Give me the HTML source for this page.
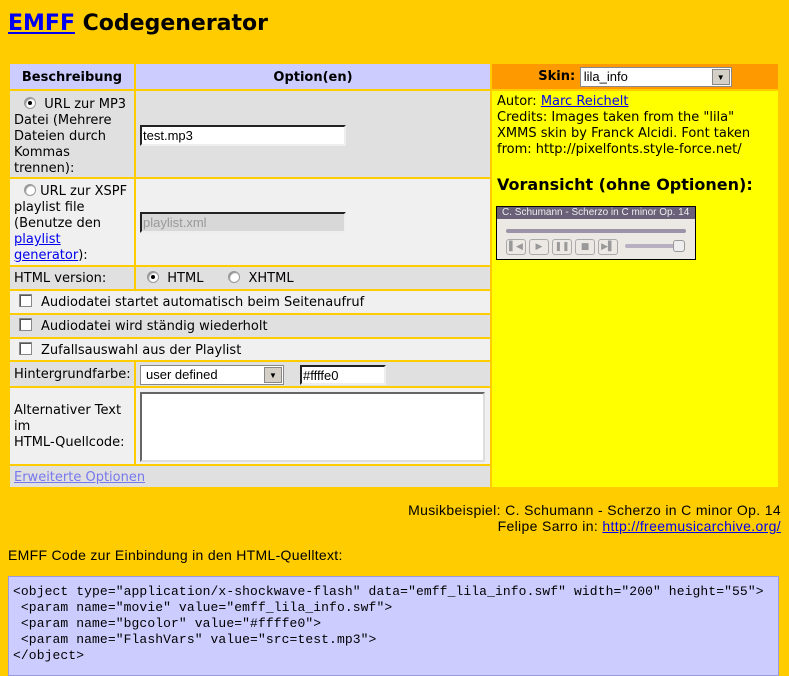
<!DOCTYPE html>
<html><head><meta charset="utf-8"><style>
body{margin:0;width:789px;height:668px;background:#ffcc00;font-family:"DejaVu Sans",Verdana,sans-serif;font-size:13px;color:#000;position:relative;overflow:hidden}
.a{position:absolute;box-sizing:border-box}
a{color:#0000ee}
.g{background:#e0e0e0}.l{background:#f0f0f0}
.h{background:#ccccff;font-weight:bold;text-align:center;line-height:27px}
.t{padding:0 4px;line-height:16px}
input.i{position:absolute;border:2px inset #ddd;border-color:#777 #eee #eee #777;background:#fff;font:13px "Liberation Sans",sans-serif;padding:0 1px;box-sizing:border-box}
.rad{display:inline-block;width:10px;height:10px;border-radius:50%;border:1px solid #999;background:#fff;vertical-align:-1px;position:relative;box-shadow:inset 1px 1px 1px #888}
.rad.on:after{content:"";position:absolute;left:3px;top:3px;width:4px;height:4px;border-radius:50%;background:#000}
.cb{display:inline-block;width:11px;height:11px;border:1px solid #888;background:#fff;box-shadow:inset 1px 1px 0 #555;vertical-align:-1px;margin-right:9px}
.btn{position:absolute;top:239px;width:20px;height:16px;border:1px solid #aaa;border-radius:3px;box-sizing:border-box;color:#999;font-size:9px;text-align:center;line-height:14px}
</style></head><body>
<div class="a" style="left:8px;top:9px;font-size:22px;font-weight:bold;line-height:30px"><a href="#">EMFF</a> Codegenerator</div>

<div class="a h" style="left:10px;top:64px;width:124px;height:25px">Beschreibung</div>
<div class="a h" style="left:136px;top:64px;width:354px;height:25px">Option(en)</div>

<div class="a g t" style="left:10px;top:91px;width:124px;height:86px;padding-top:6px"><span class="rad on" style="margin-left:10px"></span>&nbsp; URL zur MP3 Datei (Mehrere Dateien durch Kommas trennen):</div>
<div class="a g" style="left:136px;top:91px;width:354px;height:86px"></div>
<input class="i" style="left:140px;top:125px;width:206px;height:21px" value="test.mp3">

<div class="a l t" style="left:10px;top:179px;width:124px;height:86px;padding-top:5px"><span class="rad" style="margin-left:10px"></span> URL zur XSPF playlist file (Benutze den <a href="#">playlist generator</a>):</div>
<div class="a l" style="left:136px;top:179px;width:354px;height:86px"></div>
<input class="i" style="left:140px;top:212px;width:206px;height:21px;background:#d8d8d8;color:#999" value="playlist.xml">

<div class="a g t" style="left:10px;top:267px;width:124px;height:22px;line-height:24px">HTML version:</div>
<div class="a g" style="left:136px;top:267px;width:354px;height:22px;line-height:24px;padding-left:11px"><span class="rad on"></span>&nbsp; HTML &nbsp;&nbsp;&nbsp;&nbsp; <span class="rad"></span>&nbsp; XHTML</div>

<div class="a l" style="left:10px;top:291px;width:480px;height:22px;line-height:24px;padding-left:9px"><span class="cb"></span>Audiodatei startet automatisch beim Seitenaufruf</div>
<div class="a g" style="left:10px;top:315px;width:480px;height:22px;line-height:24px;padding-left:9px"><span class="cb"></span>Audiodatei wird ständig wiederholt</div>
<div class="a l" style="left:10px;top:339px;width:480px;height:21px;line-height:23px;padding-left:9px"><span class="cb"></span>Zufallsauswahl aus der Playlist</div>

<div class="a g t" style="left:10px;top:362px;width:124px;height:24px;line-height:26px">Hintergrundfarbe:</div>
<div class="a g" style="left:136px;top:362px;width:354px;height:24px"></div>
<div class="a" style="left:140px;top:365px;width:144px;height:20px;border:1px solid #888;background:#fff;font:13px 'Liberation Sans',sans-serif;line-height:18px;padding-left:5px">user defined
<div class="a" style="right:1px;top:1px;width:18px;height:16px;background:#d4d0c8;border:1px solid #888;font-size:8px;text-align:center;line-height:15px">▼</div></div>
<input class="i" style="left:300px;top:365px;width:86px;height:20px" value="#ffffe0">

<div class="a l t" style="left:10px;top:388px;width:124px;height:76px;padding-top:15px">Alternativer Text im<br><span style="white-space:nowrap">HTML-Quellcode:</span></div>
<div class="a l" style="left:136px;top:388px;width:354px;height:76px"></div>
<div class="a" style="left:140px;top:392px;width:345px;height:70px;border:2px solid;border-color:#666 #ddd #ddd #666;background:#fff"></div>

<div class="a g" style="left:10px;top:466px;width:480px;height:21px;line-height:23px;padding-left:4px"><a href="#" style="color:#7777ee">Erweiterte Optionen</a></div>

<div class="a" style="left:492px;top:64px;width:286px;height:25px;background:#ff9900;text-align:center;line-height:25px;font-weight:bold">Skin: <span style="display:inline-block;width:152px;height:20px;background:#fff;border:1px solid #888;vertical-align:middle;text-align:left;font:normal 13px 'Liberation Sans',sans-serif;line-height:18px;padding-left:3px;box-sizing:border-box;position:relative">lila_info<span style="position:absolute;right:1px;top:1px;width:18px;height:16px;background:#d4d0c8;border:1px solid #888;box-sizing:border-box;font-size:8px;text-align:center;line-height:15px">▼</span></span></div>
<div class="a" style="left:492px;top:91px;width:286px;height:396px;background:#ffff00;padding:3px 5px;line-height:16px">Autor: <a href="#">Marc Reichelt</a><br>Credits: Images taken from the "lila" XMMS skin by Franck Alcidi. Font taken from: http://pixelfonts.style-force.net/
<div style="font-weight:bold;font-size:16px;margin-top:19px">Voransicht (ohne Optionen):</div></div>

<div class="a" style="left:496px;top:206px;width:200px;height:54px;border:1px solid #000;background:#ece9e4">
<div style="height:12px;background:#6a6078;color:#eee;font:10px 'Liberation Sans',sans-serif;line-height:12px;padding-left:5px;white-space:nowrap">C. Schumann - Scherzo in C minor Op. 14</div></div>
<div class="a" style="left:506px;top:229px;width:180px;height:4px;background:#9d93a8;border-radius:2px"></div>
<div class="btn" style="left:506px">▌◀</div><div class="btn" style="left:529px">▶</div><div class="btn" style="left:552px">❚❚</div><div class="btn" style="left:575px">■</div><div class="btn" style="left:598px">▶▌</div>
<div class="a" style="left:625px;top:244px;width:55px;height:4px;background:#b8b0c0;border-radius:2px"></div>
<div class="a" style="left:673px;top:240px;width:12px;height:12px;border:1px solid #999;border-radius:3px;background:#eee"></div>

<div class="a" style="right:8px;top:502px;text-align:right;font:14px 'Liberation Sans',sans-serif;line-height:16px;letter-spacing:0.35px">Musikbeispiel: C. Schumann - Scherzo in C minor Op. 14<br>Felipe Sarro in: <a href="#">http://freemusicarchive.org/</a></div>
<div class="a" style="left:8px;top:547px;font:14px 'Liberation Sans',sans-serif;letter-spacing:0.3px">EMFF Code zur Einbindung in den HTML-Quelltext:</div>

<div class="a" style="left:8px;top:576px;width:771px;height:100px;background:#ccccff;border:1px solid #9999dd;padding:7px 4px;font:13px 'Liberation Mono',monospace;line-height:16px;white-space:pre;letter-spacing:0.1px">&lt;object type="application/x-shockwave-flash" data="emff_lila_info.swf" width="200" height="55"&gt;
 &lt;param name="movie" value="emff_lila_info.swf"&gt;
 &lt;param name="bgcolor" value="#ffffe0"&gt;
 &lt;param name="FlashVars" value="src=test.mp3"&gt;
&lt;/object&gt;</div>
</body></html>
